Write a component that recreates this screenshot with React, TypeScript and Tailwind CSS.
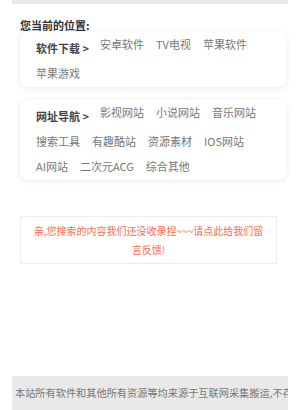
import React from "react"

const softwareLinks = ["安卓软件", "TV电视", "苹果软件", "苹果游戏"]
const siteLinks = [
  "影视网站",
  "小说网站",
  "音乐网站",
  "搜索工具",
  "有趣酷站",
  "资源素材",
  "IOS网站",
  "AI网站",
  "二次元ACG",
  "综合其他",
]

function NavCard({ title, links, className }: { title: string; links: string[]; className?: string }) {
  return (
    <div
      className={
        "ml-[8px] mr-[2px] rounded-[8px] bg-white pl-[16px] pr-[8px] pb-[1px] shadow-[0_1px_6px_rgba(0,0,0,0.09)] " +
        (className ?? "")
      }
    >
      <div className="flex flex-wrap items-start">
        <span className="mr-[11px] pt-[4px] text-[11px] font-semibold leading-[25px] text-[#444]">
          {title} &gt;
        </span>
        {links.map((link) => (
          <span key={link} className="mr-[12px] text-[11px] leading-[25px] text-[#777]">
            {link}
          </span>
        ))}
      </div>
    </div>
  )
}

export default function App() {
  return (
    <div
      className="flex h-[410px] w-[300px] flex-col overflow-hidden bg-white"
      style={{ fontFamily: '"Noto Sans CJK SC", "Noto Sans", sans-serif' }}
    >
      <div className="mx-[12px] flex flex-1 flex-col">
        <div className="h-[4px] bg-[#e9e9e9]" />
        <div className="pl-[8px] pt-[14px] text-[11px] font-bold leading-[14px] text-[#333]">
          您当前的位置:
        </div>

        <NavCard title="软件下载" links={softwareLinks} />
        <NavCard title="网址导航" links={siteLinks} className="mt-[13px]" />

        <div className="ml-[8px] mr-[11px] mt-[36px] border border-[#eeeeee] px-[11px] py-[4px] text-center text-[10px] leading-[19px] text-[#fa6d52]">
          亲,您搜索的内容我们还没收录捏~~~请点此给我们留言反馈!
        </div>

        <div className="mt-auto h-[34px] overflow-hidden whitespace-nowrap bg-[#e9e9e9] pl-[3px] text-[10.2px] leading-[34px] text-[#777]">
          本站所有软件和其他所有资源等均来源于互联网采集搬运,不存在任何商业目的
        </div>
      </div>
    </div>
  )
}
